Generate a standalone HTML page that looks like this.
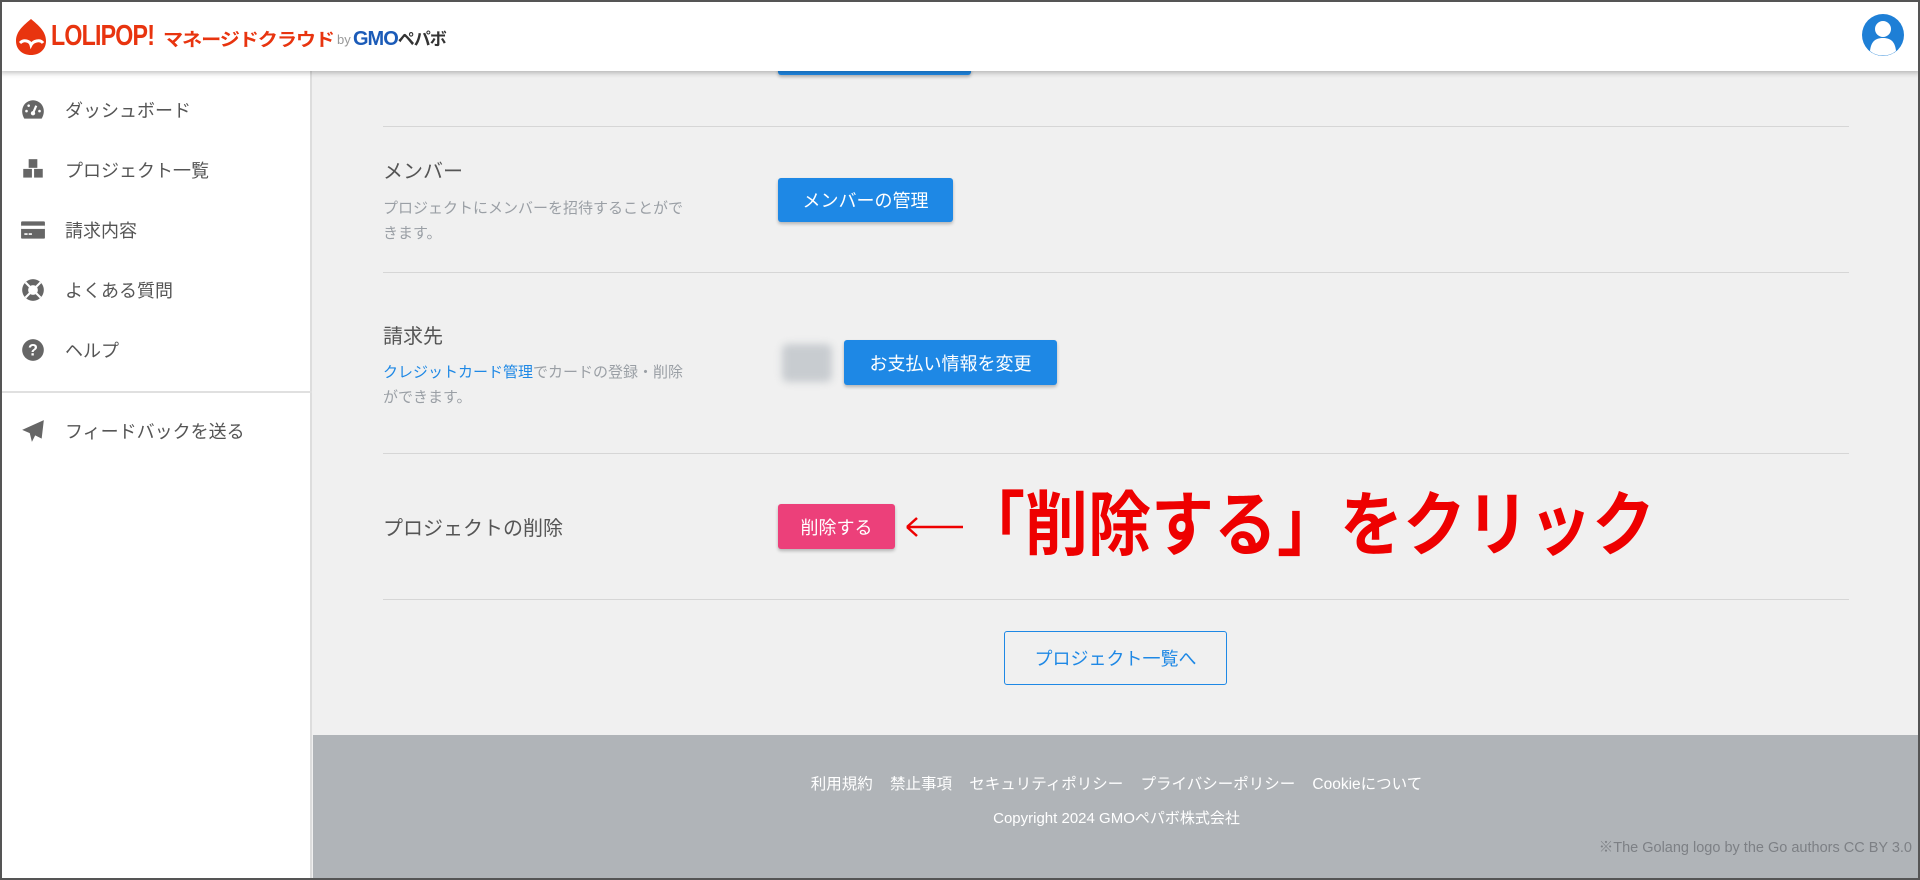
<!DOCTYPE html>
<html><head><meta charset="utf-8"><style>
*{margin:0;padding:0;box-sizing:border-box}
body{width:1920px;height:880px;overflow:hidden;background:#f0f0f0;font-family:"Liberation Sans","Noto Sans CJK JP",sans-serif;position:relative;color:#444}
.frame{position:absolute;inset:0;border:2px solid #555;z-index:50;pointer-events:none}
.hdr{position:absolute;left:0;top:0;width:1920px;height:71px;background:#fff;box-shadow:0 2px 5px rgba(0,0,0,.25);z-index:10}
.side{position:absolute;left:0;top:71px;width:312px;height:809px;background:#fff;border-right:2px solid #ddd}
.it{position:absolute;left:0;height:30px;display:flex;align-items:center;font-size:18px;color:#555}
.it svg{position:absolute;left:20px}
.it span{position:absolute;left:65px;white-space:nowrap}
.a{position:absolute}
.line{position:absolute;left:383px;width:1466px;height:1px;background:#d6d6d6}
.btn{position:absolute;background:#1e88e5;color:#fff;font-size:18px;display:flex;align-items:center;justify-content:center;border-radius:3px;box-shadow:0 2px 3px rgba(0,0,0,.25)}
.h{position:absolute;left:383px;font-size:20px;color:#555}
.d{position:absolute;left:383px;font-size:15px;color:#9a9fa5;line-height:25px}
.foot{position:absolute;left:313px;top:735px;width:1607px;height:145px;background:#b0b4b8;color:#fff}
</style></head><body>
<div class="frame"></div>
<div class="hdr">
 <svg class="a" style="left:14px;top:17px" width="34" height="40" viewBox="0 0 34 40"><path d="M17 2 C10 8 2 14 2 24 C2 33 9 38 17 38 C25 38 32 33 32 24 C32 14 24 8 17 2Z" fill="#e8340f"/><path d="M6 26 C10 22 16 24 17 28 C19 24 26 22 29 26" stroke="#fff" stroke-width="3" fill="none"/></svg>
 <div class="a" style="left:51px;top:20px;font-size:29px;font-weight:bold;color:#e8340f;letter-spacing:-1px;transform:scaleX(.8);transform-origin:left">LOLIPOP!</div>
 <div class="a" style="left:163px;top:26px;font-size:18px;font-weight:bold;color:#e8340f;letter-spacing:-1px;transform:scaleX(1.12);transform-origin:left">マネージドクラウド</div>
 <div class="a" style="left:337px;top:32px;font-size:13px;color:#999">by</div>
 <div class="a" style="left:353px;top:25px;font-size:20px;font-weight:bold;color:#1b5bb8;letter-spacing:-1px">GMO<span style="color:#333;font-size:17px">ペパボ</span></div>
 <svg class="a" style="left:1861px;top:13px" width="44" height="44" viewBox="0 0 44 44"><circle cx="22" cy="22" r="21" fill="#1e7fd6"/><circle cx="22" cy="16" r="8" fill="#fff"/><path d="M9 38 C10 28 15 25 22 25 C29 25 34 28 35 38 C28 44 16 44 9 38Z" fill="#fff"/></svg>
</div>
<div class="side">
 <div class="it" style="top:24px"><svg width="26" height="26" viewBox="0 0 24 24"><path d="M12 3A10 10 0 0 0 2 13c0 3 1 5 2 7h16c1-2 2-4 2-7A10 10 0 0 0 12 3z" fill="#666"/><circle cx="12" cy="15" r="2" fill="#fff"/><path d="M12 15l3-7" stroke="#fff" stroke-width="2"/><circle cx="6" cy="13" r="1.2" fill="#fff"/><circle cx="8" cy="8" r="1.2" fill="#fff"/><circle cx="18" cy="13" r="1.2" fill="#fff"/></svg><span>ダッシュボード</span></div>
 <div class="it" style="top:84px"><svg width="26" height="26" viewBox="0 0 24 24"><rect x="8" y="2" width="8" height="8" fill="#666"/><rect x="3" y="11" width="8" height="8" fill="#666"/><rect x="13" y="11" width="8" height="8" fill="#666"/></svg><span>プロジェクト一覧</span></div>
 <div class="it" style="top:144px"><svg width="26" height="26" viewBox="0 0 24 24"><rect x="1" y="4" width="22" height="16" rx="1" fill="#666"/><rect x="1" y="8" width="22" height="3" fill="#fff"/><rect x="4" y="15" width="3" height="1.5" fill="#fff"/><rect x="8" y="15" width="3" height="1.5" fill="#fff"/></svg><span>請求内容</span></div>
 <div class="it" style="top:204px"><svg width="26" height="26" viewBox="0 0 24 24"><circle cx="12" cy="12" r="10" fill="#666"/><circle cx="12" cy="12" r="4.5" fill="#fff"/><path d="M5 5l4 4M19 5l-4 4M5 19l4-4M19 19l-4-4" stroke="#fff" stroke-width="2"/></svg><span>よくある質問</span></div>
 <div class="it" style="top:264px"><svg width="26" height="26" viewBox="0 0 24 24"><circle cx="12" cy="12" r="10" fill="#666"/><text x="12" y="17" text-anchor="middle" font-size="15" font-weight="bold" fill="#fff" font-family="Liberation Sans">?</text></svg><span>ヘルプ</span></div>
 <div class="a" style="left:0;top:320px;width:312px;height:2px;background:#e0e0e0"></div>
 <div class="it" style="top:345px"><svg width="26" height="26" viewBox="0 0 24 24"><path d="M22 2L2 11l7 3 2 8 3-6 6 3z" fill="#666"/></svg><span>フィードバックを送る</span></div>
</div>
<div class="btn" style="left:778px;top:50px;width:193px;height:25px"></div>
<div class="line" style="top:126px"></div>
<div class="h" style="top:155px">メンバー</div>
<div class="d" style="top:196px">プロジェクトにメンバーを招待することがで<br>きます。</div>
<div class="btn" style="left:778px;top:178px;width:175px;height:44px">メンバーの管理</div>
<div class="line" style="top:272px"></div>
<div class="h" style="top:320px">請求先</div>
<div class="d" style="top:360px"><span style="color:#1e88e5">クレジットカード管理</span>でカードの登録・削除<br>ができます。</div>
<div class="a" style="left:782px;top:344px;width:50px;height:38px;background:#c8ccd0;border-radius:6px;filter:blur(4px)"></div>
<div class="btn" style="left:844px;top:340px;width:213px;height:45px">お支払い情報を変更</div>
<div class="line" style="top:453px"></div>
<div class="h" style="top:512px">プロジェクトの削除</div>
<div class="btn" style="left:778px;top:504px;width:117px;height:45px;background:#ec407a">削除する</div>
<svg class="a" style="left:905px;top:515px" width="60" height="24" viewBox="0 0 60 24"><path d="M2 12H58M2 12L12 3M2 12L12 21" stroke="#e00" stroke-width="2.5" fill="none"/></svg>
<div class="a" style="left:962px;top:486px;font-size:63px;font-weight:bold;color:#e00;line-height:80px;white-space:nowrap;transform:scaleY(1.12);transform-origin:center">「削除する」をクリック</div>
<div class="line" style="top:599px"></div>
<div class="a" style="left:1004px;top:631px;width:223px;height:54px;border:1px solid #1e88e5;border-radius:3px;color:#1e88e5;font-size:18px;display:flex;align-items:center;justify-content:center">プロジェクト一覧へ</div>
<div class="foot">
 <div class="a" style="left:0;width:1607px;top:37px;text-align:center;font-size:15.5px;word-spacing:0">利用規約&nbsp;&nbsp;&nbsp;&nbsp;禁止事項&nbsp;&nbsp;&nbsp;&nbsp;セキュリティポリシー&nbsp;&nbsp;&nbsp;&nbsp;プライバシーポリシー&nbsp;&nbsp;&nbsp;&nbsp;Cookieについて</div>
 <div class="a" style="left:0;width:1607px;top:72px;text-align:center;font-size:15px">Copyright 2024 GMOペパボ株式会社</div>
 <div class="a" style="right:8px;top:101px;font-size:14.5px;color:#7d8085">※The Golang logo by the Go authors CC BY 3.0</div>
</div>
</body></html>
